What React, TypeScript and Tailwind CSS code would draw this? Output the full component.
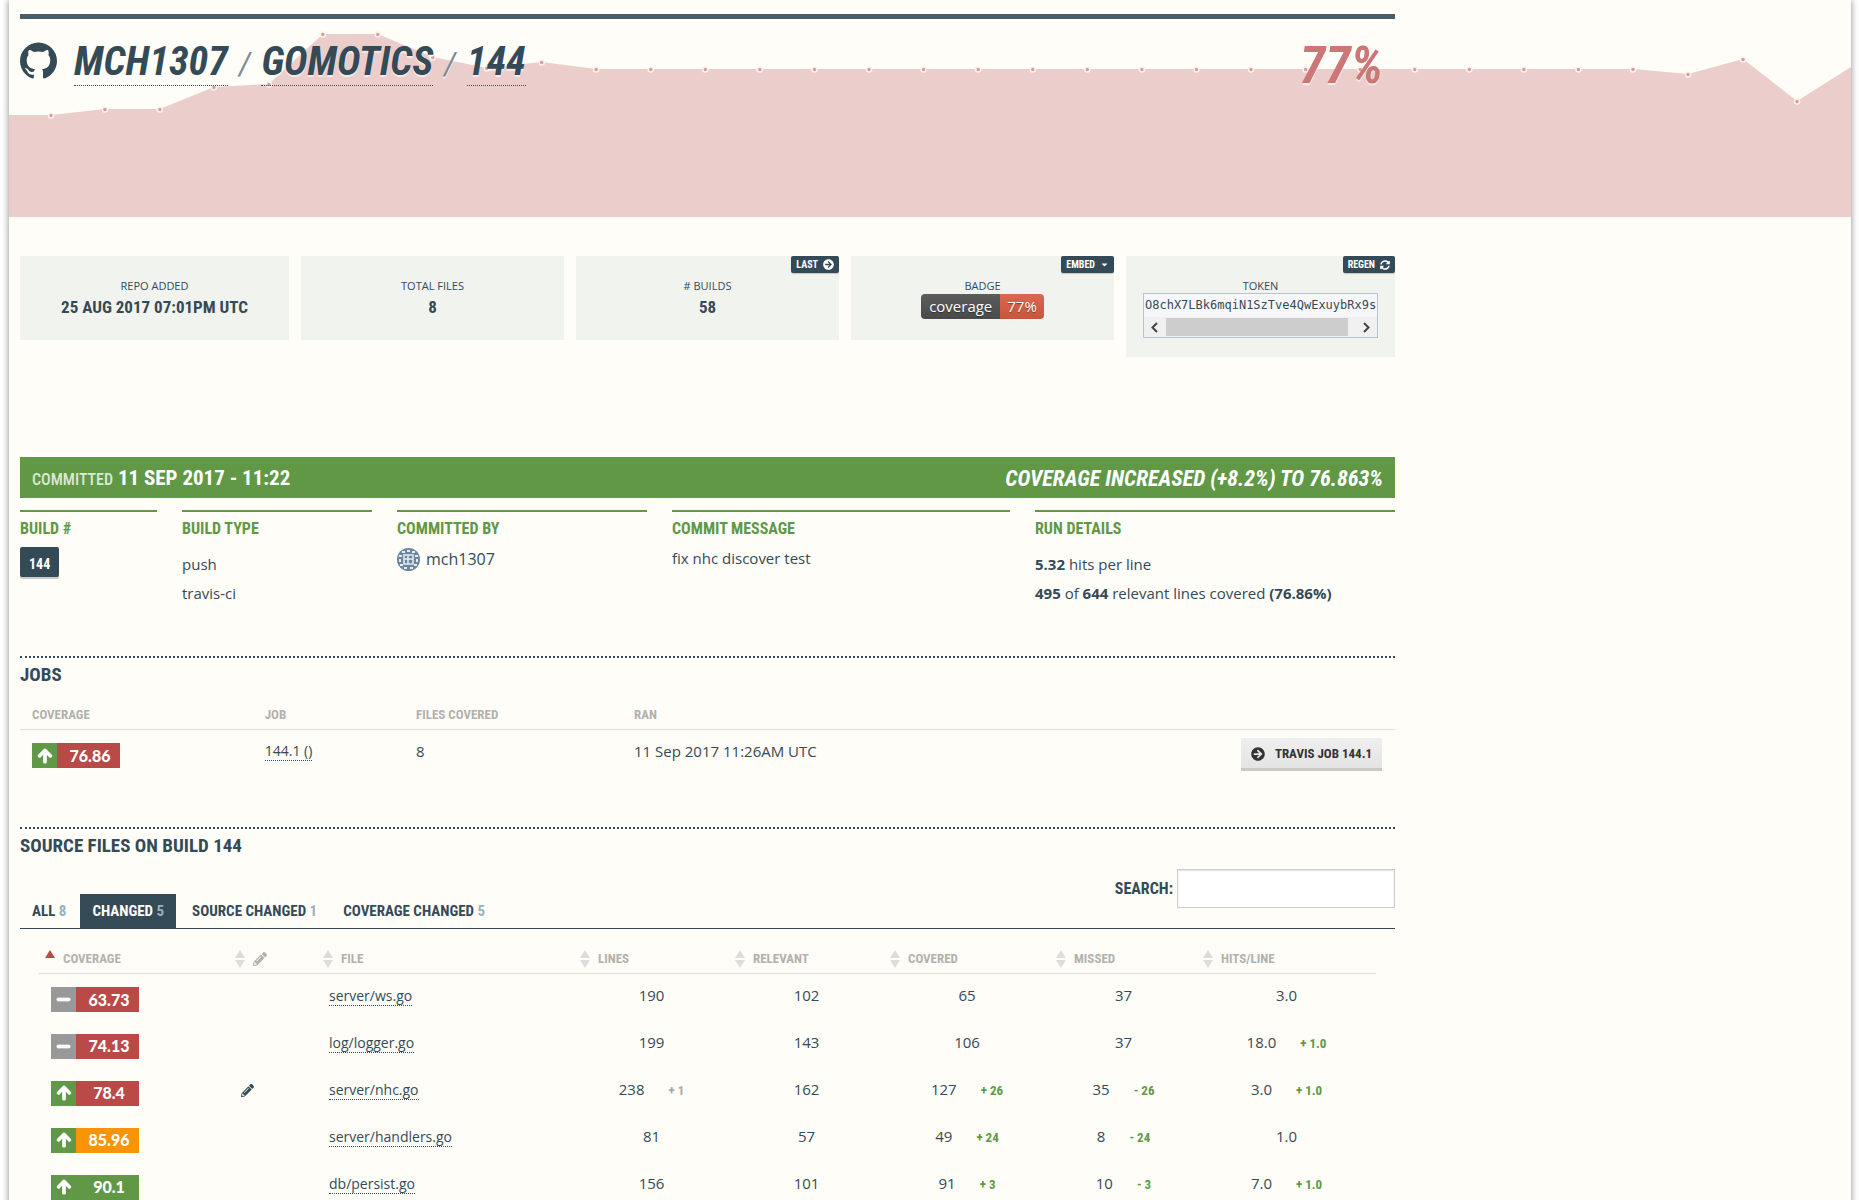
import React from "react";
import { FaArrowCircleRight, FaSyncAlt, FaPencilAlt, FaArrowUp, FaMinus, FaCaretDown } from "react-icons/fa";
import { SiGithub } from "react-icons/si";

const cond = "font-['Roboto_Condensed',sans-serif] font-bold uppercase";

const points: [number, number][] = [
  [42, 115], [96, 109], [151, 109], [205, 87], [260, 84], [314, 34], [369, 34], [424, 57], [478, 68], [533, 62],
  ...Array.from({ length: 20 }, (_, i): [number, number] => [587.5 + i * 54.6, 69]),
  [1680, 74], [1735, 59], [1789, 101],
];

const infoCols = "grid grid-cols-[137fr_190fr_250fr_338fr_360fr] gap-[25px]";

function Chart() {
  const line = points.map(([x, y]) => `${x},${y}`).join(" ");
  return (
    <svg className="absolute inset-0 h-full w-full" viewBox="0 0 1843 217" preserveAspectRatio="none" aria-hidden="true">
      <polygon points={`0,115 ${line} 1843,67 1843,217 0,217`} fill="#ebcecb" />
      {points.map(([x, y]) => (
        <circle key={x} cx={x} cy={y + 0.5} r="2.5" fill="#dd9a99" stroke="#fbf3ee" strokeWidth="1.5" />
      ))}
    </svg>
  );
}

function Card({ label, action, children }: { label: string; action?: React.ReactNode; children: React.ReactNode }) {
  return (
    <div className="relative flex min-h-[84px] min-w-0 flex-col items-center self-start bg-[#f1f3ef] px-[17px] pt-[21px] pb-[19px]">
      {action && (
        <button className={`${cond} absolute top-0 right-0 flex h-[17px] items-center gap-[5px] rounded-[2px] bg-[#354a57] px-[5px] text-[10px] text-white shadow-[0_1px_1px_#c4c6c4]`}>
          {action}
        </button>
      )}
      <div className="text-[11px] leading-[18px] uppercase">{label}</div>
      {children}
    </div>
  );
}

function Value({ children }: { children: React.ReactNode }) {
  return <div className={`${cond} text-[17px] leading-[25px]`}>{children}</div>;
}

function Coverage({ value, up, tone }: { value: string; up?: boolean; tone: string }) {
  return (
    <span className="flex h-[25px] w-[88px] text-white">
      <span className={`flex w-[25px] items-center justify-center ${up ? "bg-[#609846]" : "bg-[#999999]"}`}>
        {up ? <FaArrowUp size={16} stroke="currentColor" strokeWidth={36} /> : <FaMinus size={15} stroke="currentColor" strokeWidth={30} />}
      </span>
      <span className={`flex flex-1 items-center justify-center pl-[3px] font-['Lato'] text-[16px] font-black ${tone}`}>{value}</span>
    </span>
  );
}

function Sort({ asc }: { asc?: boolean }) {
  return (
    <svg className="h-[18px] w-[10px] shrink-0" viewBox="0 0 10 18" aria-hidden="true">
      <path d="M5 0L10 8H0Z" fill={asc ? "#b94a48" : "#dddddd"} />
      {!asc && <path d="M5 18L10 10H0Z" fill="#dddddd" />}
    </svg>
  );
}

const red = "bg-[#b94a48]";
const files = [
  { cov: "63.73", tone: red, name: "server/ws.go", cells: [["190"], ["102"], ["65"], ["37"], ["3.0"]] },
  { cov: "74.13", tone: red, name: "log/logger.go", cells: [["199"], ["143"], ["106"], ["37"], ["18.0", "+ 1.0"]] },
  { cov: "78.4", up: true, edited: true, tone: red, name: "server/nhc.go", cells: [["238", "+ 1"], ["162"], ["127", "+ 26"], ["35", "- 26"], ["3.0", "+ 1.0"]] },
  { cov: "85.96", up: true, tone: "bg-[#f89406]", name: "server/handlers.go", cells: [["81"], ["57"], ["49", "+ 24"], ["8", "- 24"], ["1.0"]] },
  { cov: "90.1", up: true, tone: "bg-[#609846]", name: "db/persist.go", cells: [["156"], ["101"], ["91", "+ 3"], ["10", "- 3"], ["7.0", "+ 1.0"]] },
];

const tabs = [["All", "8"], ["Changed", "5"], ["Source changed", "1"], ["Coverage changed", "5"]];
const details = ["Build #", "Build type", "Committed by", "Commit message", "Run details"];

export default function App() {
  return (
    <div className="h-screen overflow-hidden bg-white pr-[8px] pl-[9px] font-['Open_Sans',sans-serif] text-[15px] leading-[24px] text-[#354a57]">
      <main className="min-h-screen bg-[#fefdf8] shadow-[0_0_7px_#888]">
        <header className="relative h-[217px] pt-[14px] pl-[11px]">
          <Chart />
          <div className="relative max-w-[1375px] border-t-[5px] border-[#4a5d67] [text-shadow:0_2px_1px_#fff9]">
            <div className="flex items-center pt-4 pr-3">
              <SiGithub size={37} />
              <h1 className={`${cond} ml-[17px] flex items-center text-[40px] leading-[46px] italic`}>
                <a href="#owner" className="border-b border-dotted border-[#354a57] pt-1">mch1307</a>
                <span className="px-[11px] pt-1 text-[32px] font-normal text-[#7d8a93]">/</span>
                <a href="#repo" className="border-b border-dotted border-[#354a57] pt-1">gomotics</a>
                <span className="px-[11px] pt-1 text-[32px] font-normal text-[#7d8a93]">/</span>
                <a href="#build" className="border-b border-dotted border-[#354a57] pt-1">144</a>
              </h1>
              <div className={`${cond} mt-[10px] ml-auto text-[52px] leading-[41px] text-[#cc7676] italic`}>77%</div>
            </div>
          </div>
        </header>

        <div className="max-w-[1386px] pl-[11px]">
          <section className="mt-[39px] grid h-[101px] grid-cols-[269fr_263fr_263fr_263fr_269fr] gap-3">
            <Card label="Repo added"><Value>25 Aug 2017 07:01PM UTC</Value></Card>
            <Card label="Total files"><Value>8</Value></Card>
            <Card label="# Builds" action={<>Last <FaArrowCircleRight size={11} /></>}><Value>58</Value></Card>
            <Card label="Badge" action={<>Embed <FaCaretDown size={9} /></>}>
              <div className="mt-[-1px] flex h-[25px] overflow-hidden rounded-[4px] text-[15px] text-white [text-shadow:0_1px_1px_#0006]">
                <span className="bg-linear-to-b from-[#5c5c5c] to-[#4a4a4a] px-[8px]">coverage</span>
                <span className="bg-linear-to-b from-[#dc664f] to-[#c9543e] px-[7px]">77%</span>
              </div>
            </Card>
            <Card label="Token" action={<>Regen <FaSyncAlt size={10} /></>}>
              <div className="mt-[-2px] w-full border border-[#b5c5cf] bg-[#f7f7fa]">
                <pre className="pl-px font-['DejaVu_Sans_Mono',monospace] text-[12px] leading-[23px]">O8chX7LBk6mqiN1SzTve4QwExuybRx9s</pre>
                <div className="flex h-5 items-center justify-between bg-[#f0f0f0] px-[6px] text-[#444]">
                  <svg className="h-[11px] w-[9px]" viewBox="0 0 9 11"><path d="M7 1L2.5 5.5L7 10" fill="none" stroke="currentColor" strokeWidth="2" /></svg>
                  <span className="mr-[14px] ml-[7px] h-[18px] flex-1 bg-[#cdcdcd]" />
                  <svg className="h-[11px] w-[9px]" viewBox="0 0 9 11"><path d="M2 1L6.5 5.5L2 10" fill="none" stroke="currentColor" strokeWidth="2" /></svg>
                </div>
              </div>
            </Card>
          </section>

          <section className={`${cond} mt-[100px] flex h-[41px] items-center justify-between bg-[#609846] px-3 pt-[2px] text-[21px] text-white`}>
            <h2><span className="text-[16px] font-medium text-[#dbe8d3]">Committed</span> 11 Sep 2017 - 11:22</h2>
            <em className="text-[22px]">Coverage increased (+8.2%) to 76.863%</em>
          </section>

          <section className={`mt-3 h-[146px] ${infoCols}`}>
            {details.map((title, i) => (
              <div key={title} className="border-t-2 border-[#609846]">
                <h3 className={`${cond} pt-[5px] text-[16px] leading-[24px] text-[#609846]`}>{title}</h3>
                {i === 0 && <button className={`${cond} mt-[6px] h-[30px] rounded-[2px] bg-[#354a57] px-[9px] pt-1 text-[14px] leading-none text-white shadow-[0_2px_0_#c9cccd]`}>144</button>}
                {i === 1 && <div className="mt-[9px] leading-[29px]">push<br />travis-ci</div>}
                {i === 2 && (
                  <div className="mt-[6px] flex items-center gap-[6px] text-[16px]">
                    <svg className="size-[23px]" viewBox="0 0 23 23">
                      <circle cx="11.5" cy="11.5" r="11.5" fill="#6d87a0" />
                      <path d="M7 7h9v9H7zM11 7v9M7 11h9" fill="none" stroke="#e6edf2" strokeWidth="1.5" />
                      <path d="M5 3h3v2H5zM10 2h3v2h-3zM15 3h3v2h-3zM2 7h3v2H2zM2 11h2v3H2zM3 16h3v2H3zM18 7h3v2h-3zM19 11h2v3h-2zM17 16h3v2h-3zM7 19h3v2H7zM13 19h3v2h-3z" fill="#e6edf2" />
                    </svg>
                    mch1307
                  </div>
                )}
                {i === 3 && <div className="mt-[5px]">fix nhc discover test</div>}
                {i === 4 && <div className="mt-[9px] leading-[29px]"><b>5.32</b> hits per line<br /><b>495</b> of <b>644</b> relevant lines covered <b>(76.86%)</b></div>}
              </div>
            ))}
          </section>

          <section className="h-[171px] border-t-2 border-dotted border-[#354a57] pt-[3px]">
            <h2 className={`${cond} text-[19px] leading-[28px]`}>Jobs</h2>
            <table className="mt-[12px] w-full table-fixed text-left">
              <colgroup><col className="w-[17%]" /><col className="w-[11%]" /><col className="w-[16%]" /><col /><col className="w-[14%]" /></colgroup>
              <thead className={`${cond} text-[13px] leading-[28px] text-[#b3b1ac]`}>
                <tr className="border-b border-[#deded9]"><th className="pl-[12px]">Coverage</th><th className="pl-[11px]">Job</th><th className="pl-[11px]">Files covered</th><th className="pl-[9px]">Ran</th><th /></tr>
              </thead>
              <tbody>
                <tr className="align-top">
                  <td className="pt-[13px] pl-[12px]"><Coverage value="76.86" up tone={red} /></td>
                  <td className="pt-[9px] pl-[11px] text-[14px]"><a href="#job" className="border-b border-dotted border-[#354a57]">144.1 ()</a></td>
                  <td className="pt-[9px] pl-[11px]">8</td>
                  <td className="pt-[9px] pl-[9px]">11 Sep 2017 11:26AM UTC</td>
                  <td className="pt-2 pr-[13px]">
                    <button className={`${cond} ml-auto flex h-[30px] items-center gap-[10px] bg-linear-to-b from-[#efefef] to-[#e4e4e4] px-[10px] pt-[2px] text-[13px] text-[#333] shadow-[0_3px_0_#c9c9c6]`}>
                      <FaArrowCircleRight size={14} /> Travis job 144.1
                    </button>
                  </td>
                </tr>
              </tbody>
            </table>
          </section>

          <section className="border-t-2 border-dotted border-[#354a57] pt-[3px]">
            <h2 className={`${cond} text-[19px] leading-[28px]`}>Source files on build 144</h2>
            <div className="mt-[9px] flex h-[60px] items-start justify-between border-b border-[#354a57]">
              <nav className={`${cond} flex self-end text-[15px] leading-[34px]`}>
                {tabs.map(([name, n], i) => (
                  <button key={name} className={`uppercase ${i === 1 ? "mr-[4px] ml-[2px] bg-[#354a57] px-[12px] text-white" : i === 0 ? "px-[12px]" : "pr-[14px] pl-[12px]"}`}>
                    {name} <span className="text-[#9ab0bf]">{n}</span>
                  </button>
                ))}
              </nav>
              <label className={`${cond} flex items-center gap-1 text-[16px]`}>
                Search:
                <input type="text" className="h-[39px] w-[218px] border border-[#ccc] bg-white px-2 text-[#354a57] shadow-[inset_0_1px_2px_#e3e3e3]" />
              </label>
            </div>
            <div className="pr-[19px] pl-[19px]">
              <table className="mt-[18px] w-full table-fixed">
                <colgroup>
                  <col className="w-[190px]" /><col className="w-[88px]" /><col /><col className="w-[155px]" /><col className="w-[155px]" /><col className="w-[166px]" /><col className="w-[147px]" /><col className="w-[179px]" />
                </colgroup>
                <thead className={`${cond} text-[13px] text-[#b3b1ac]`}>
                  <tr className="border-b border-[#deded9]">
                    {["Coverage", "", "File", "Lines", "Relevant", "Covered", "Missed", "Hits/Line"].map((h, i) => (
                      <th key={i} className="pt-0 pb-[2px] pl-[6px]">
                        <span className="flex items-center gap-2">
                          <Sort asc={i === 0} />
                          {i === 1 ? <FaPencilAlt size={14} aria-label="Edited" /> : h}
                        </span>
                      </th>
                    ))}
                  </tr>
                </thead>
                <tbody>
                  {files.map((f) => (
                    <tr key={f.name} className="h-[47px] align-top">
                      <td className="pt-[13px] pl-[12px]"><Coverage value={f.cov} up={f.up} tone={f.tone} /></td>
                      <td className="pt-[16px] pl-[12px]">{f.edited && <FaPencilAlt size={13} />}</td>
                      <td className="pt-[10px] pl-[12px] text-[14px]"><a href={`#${f.name}`} className="border-b border-dotted border-[#354a57]">{f.name}</a></td>
                      {f.cells.map(([v, d], i) => (
                        <td key={i} className="pt-[9px] text-center">
                          {v}
                          {d && <span className={`${cond} ml-6 text-[13px] ${i === 0 ? "text-[#a9a9a6]" : "text-[#609846]"}`}>{d}</span>}
                        </td>
                      ))}
                    </tr>
                  ))}
                </tbody>
              </table>
            </div>
          </section>
        </div>
      </main>
    </div>
  );
}
